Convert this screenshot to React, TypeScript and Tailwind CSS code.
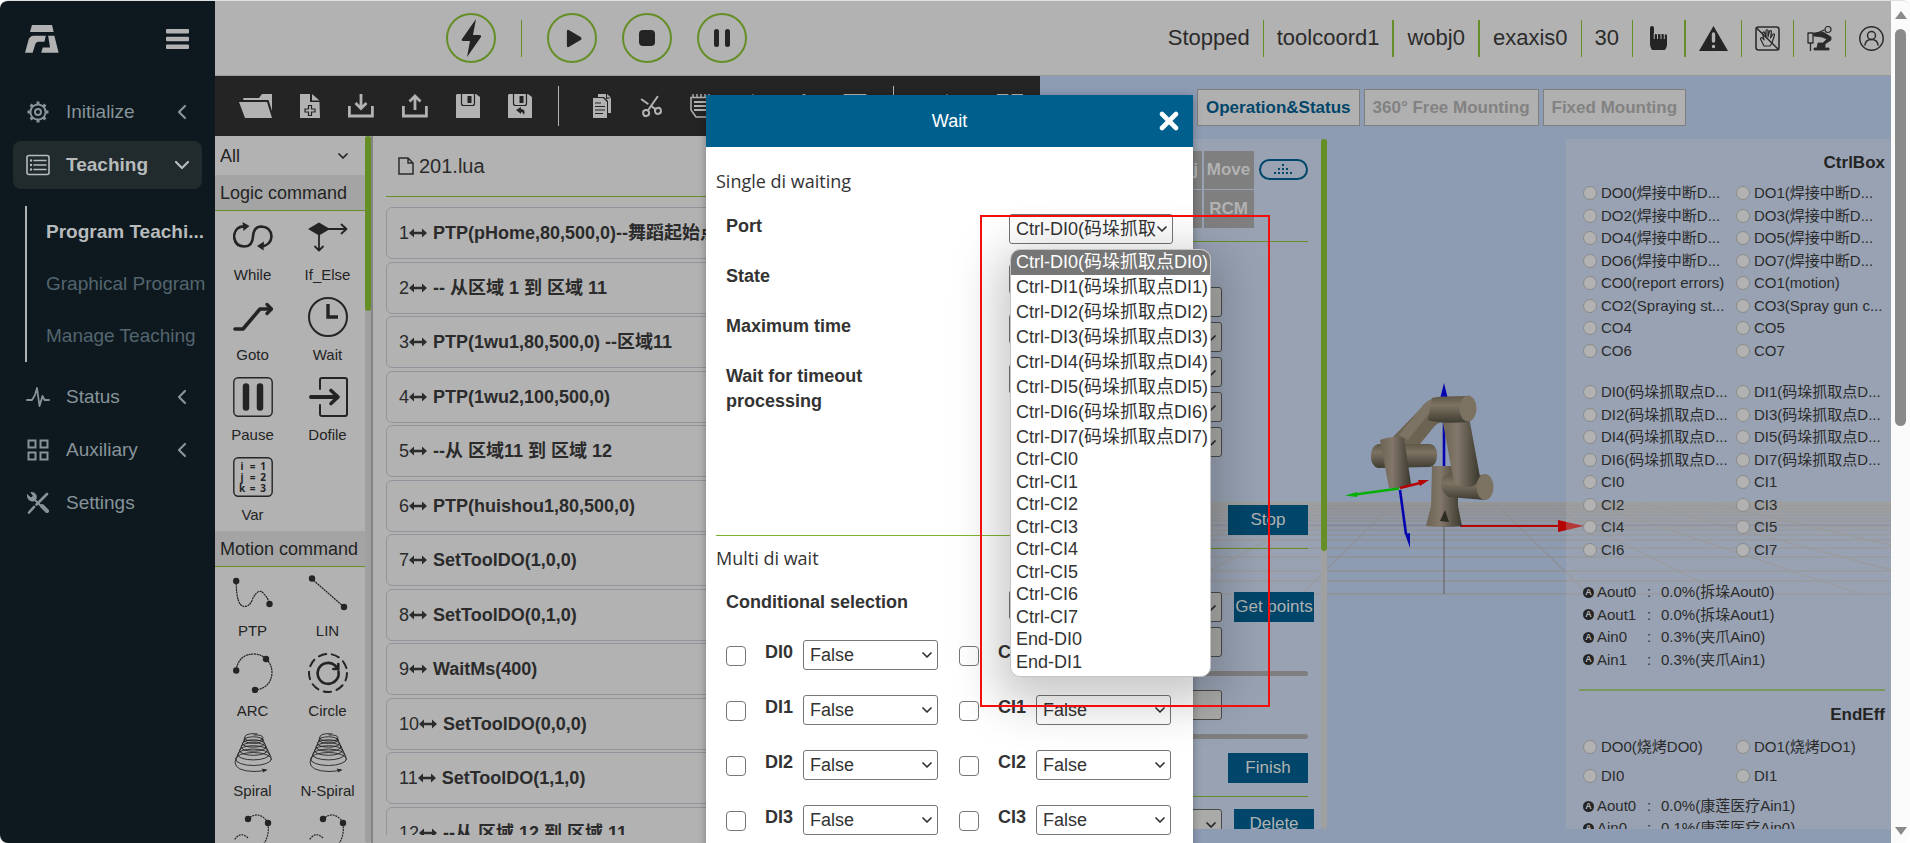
import React from "react";
import { ChevronDown, ChevronLeft, Scissors, X } from "lucide-react";

type SvgProps = { className?: string; box?: string; children: React.ReactNode };

function Svg({ className = "", box = "0 0 24 24", children }: SvgProps) {
  return (
    <svg viewBox={box} className={className} fill="none" stroke="currentColor" strokeLinecap="round" strokeLinejoin="round" aria-hidden="true">
      {children}
    </svg>
  );
}

/* ---------- Sidebar ---------- */

function Logo() {
  return (
    <svg viewBox="75 69 103 85" className="h-7 w-[34px]" fill="#b2b2b2" aria-hidden="true">
      <path d="M96 69h61l5 21H90z" />
      <path d="M75 153l10-37q4-14 17-14h36l-4 18h-17q-9 0-11 8l-8 25z" />
      <path d="M145 102h19l13 51h-53l5-16h22z" />
    </svg>
  );
}

const gearIcon = (
  <Svg className="h-6 w-6">
    <circle cx="12" cy="12" r="7.6" strokeWidth="2" />
    <circle cx="12" cy="12" r="3" strokeWidth="2" />
    <path strokeWidth="3" strokeLinecap="butt" d="M12 1.5v3M12 19.5v3M1.5 12h3M19.5 12h3M4.6 4.6l2 2M17.4 17.4l2 2M4.6 19.4l2-2M17.4 6.6l2-2" />
  </Svg>
);
const teachIcon = (
  <Svg className="h-6 w-6">
    <rect x="1" y="2.5" width="22" height="19" rx="2" strokeWidth="1.6" />
    <path strokeWidth="1.4" d="M8 7.5h12M8 12h12M8 16.500h12" />
    <path strokeWidth="2.4" d="M5 7.500h.01M5 12h.01M5 16.500h.01" />
  </Svg>
);
const statusIcon = (
  <Svg className="h-6 w-6">
    <path strokeWidth="1.8" d="M1 15h5l3-5 2-7 2.500 18 3-10 2 4h4.500" />
  </Svg>
);
const auxIcon = (
  <Svg className="h-6 w-6">
    <path strokeWidth="2" strokeLinejoin="miter" d="M2.500 2.500h7v7h-7zM14.500 2.500h7v7h-7zM2.500 14.500h7v7h-7zM14.500 14.500h7v7h-7z" />
  </Svg>
);
const toolsIcon = (
  <Svg className="h-6 w-6">
    <path strokeWidth="4" d="M16 15l5 5" />
    <path strokeWidth="2.600" d="M21 3L10.500 13.500M8 16l-5 5.500" />
    <path strokeWidth="2" d="M8 8l7 7" />
    <path fill="currentColor" strokeWidth="1" d="M1.500 4l3.500 3 2.500-2L5 1.500C9 1 11 4 10 8L8 10C4 10.500 1 8 1.500 4z" />
  </Svg>
);

function NavRow({ icon, label, chevron, active }: { icon: React.ReactNode; label: string; chevron?: "left" | "down"; active?: boolean }) {
  return (
    <button
      type="button"
      className={
        active
          ? "flex h-12 w-full items-center rounded-lg bg-[#212b2e] px-[13px] pr-2 font-bold text-[#b8bbbc]"
          : "flex h-12 w-full items-center rounded-lg px-[13px] pr-2 text-[#87939a]"
      }
    >
      {icon}
      <span className="ml-4 flex-1 text-left">{label}</span>
      {chevron === "left" && <ChevronLeft className="h-6 w-6" strokeWidth={2.2} />}
      {chevron === "down" && <ChevronDown className="h-6 w-6" strokeWidth={2.2} />}
    </button>
  );
}

function Sidebar() {
  return (
    <nav className="flex w-[215px] shrink-0 flex-col bg-[#0d191e] text-[19px] leading-6">
      <div className="flex h-[75px] items-center justify-between pl-[25px] pr-[26px]">
        <Logo />
        <button type="button" aria-label="Menu" className="text-[#b2b2b2]">
          <svg viewBox="0 0 23 20" className="h-5 w-[23px]" fill="currentColor" aria-hidden="true">
            <rect width="23" height="4.500" rx="1" />
            <rect y="7.800" width="23" height="4.500" rx="1" />
            <rect y="15.500" width="23" height="4.500" rx="1" />
          </svg>
        </button>
      </div>
      <div className="flex flex-col gap-[5px] px-[13px] pt-3">
        <NavRow icon={gearIcon} label="Initialize" chevron="left" />
        <NavRow icon={teachIcon} label="Teaching" chevron="down" active />
      </div>
      <div className="ml-[25px] mt-[17px] flex flex-col border-l-2 border-[#b2b2b2] pl-[19px] text-[#54656f]">
        <a href="#program" className="flex h-[52px] items-center whitespace-nowrap font-bold text-[#b8bbbc]">Program Teachi...</a>
        <a href="#graphical" className="flex h-[52px] items-center whitespace-nowrap">Graphical Program</a>
        <a href="#manage" className="flex h-[52px] items-center whitespace-nowrap">Manage Teaching</a>
      </div>
      <div className="mt-[11px] flex flex-col gap-[5px] px-[13px]">
        <NavRow icon={statusIcon} label="Status" chevron="left" />
        <NavRow icon={auxIcon} label="Auxiliary" chevron="left" />
        <NavRow icon={toolsIcon} label="Settings" />
      </div>
    </nav>
  );
}

/* ---------- Header ---------- */

function RoundButton({ label, children }: { label: string; children: React.ReactNode }) {
  return (
    <button type="button" aria-label={label} className="flex h-[50px] w-[50px] items-center justify-center rounded-full border-2 border-[#658f26] text-[#242424]">
      {children}
    </button>
  );
}

function Header() {
  const cell = "flex h-[37px] items-center px-[13px]";
  const line = "border-l border-[#658f26]";
  const thick = "border-l-2 border-[#658f26]";
  return (
    <header className="flex h-[75px] shrink-0 items-center justify-between border-b border-[#9a9a9a] bg-[#b2b2b2] text-[#2b2b2b]">
      <div className="flex items-center pl-[231px]">
        <RoundButton label="Enable">
          <svg viewBox="0 0 20 38" className="h-[38px] w-5" fill="currentColor" aria-hidden="true"><path d="M15 0L1 20q-1 2 1 2h7L6 38 20 18q1-2-2-2h-6z" /></svg>
        </RoundButton>
        <span className="mx-[25px] h-[37px] w-px bg-[#658f26]" />
        <div className="flex gap-[25px]">
          <RoundButton label="Start">
            <svg viewBox="0 0 18 20" className="ml-1 h-[19px] w-4" fill="currentColor" aria-hidden="true"><path d="M1 2q0-3 3-1l12 7q3 2 0 4L4 19q-3 2-3-1z" /></svg>
          </RoundButton>
          <RoundButton label="Stop program"><span className="h-4 w-4 rounded-sm bg-[#242424]" /></RoundButton>
          <RoundButton label="Pause program">
            <span className="flex gap-1.5"><span className="h-[18px] w-[5px] rounded-full bg-[#242424]" /><span className="h-[18px] w-[5px] rounded-full bg-[#242424]" /></span>
          </RoundButton>
        </div>
      </div>
      <div className="flex items-center text-[22px] leading-7">
        <span className={cell}>Stopped</span>
        <span className={`${cell} ${line}`}>toolcoord1</span>
        <span className={`${cell} ${thick}`}>wobj0</span>
        <span className={`${cell} ${thick}`}>exaxis0</span>
        <span className={`${cell} ${line}`}>30</span>
        <button type="button" aria-label="Manual mode" className={`${cell} ${line}`}>
          <svg viewBox="0 0 25 25" className="h-[25px] w-[25px]" fill="#242424" aria-hidden="true"><path d="M4 2q0-2 2-2t2 2v7q1-2 3.500 0 1.500-2 3.500 0 1.500-2 3.500 0Q21 7 21 10v9q0 2-2 5H6q-2-3-2-6z" /><path stroke="#b2b2b2" strokeWidth="1" d="M11.500 9v4M15 9v4M18.300 9v4M8.200 7v6" /></svg>
        </button>
        <button type="button" aria-label="Warnings" className={`${cell} ${thick}`}>
          <svg viewBox="0 0 29 25" className="h-[25px] w-[29px]" aria-hidden="true"><path fill="#242424" d="M14.500 0L29 25H0z" /><path stroke="#b2b2b2" strokeWidth="3.400" strokeLinecap="round" d="M14.500 8v7M14.500 20.500v.1" /></svg>
        </button>
        <button type="button" aria-label="Drag mode off" className={`${cell} ${line}`}>
          <Svg box="0 0 25 25" className="h-[25px] w-[25px]">
            <rect x="1" y="1" width="23" height="23" rx="2.500" strokeWidth="1.600" />
            <path strokeWidth="1.200" d="M9 20l-3.500-7q0-2 2-1l1.500 2L7.500 7q.5-1.800 2-.5L11 11V4.500q1-1.500 2 0V11l1.500-6q1.500-1 2 .5L15.500 12l2.500-4q1.500-.5 1.500 1L17 17l-2 3z" />
            <path strokeWidth="1.500" d="M1.500 2l22 21.500" />
          </Svg>
        </button>
        <button type="button" aria-label="Robot" className={`${cell} ${line}`}>
          <Svg box="0 0 25 25" className="h-[25px] w-[25px]">
            <path strokeWidth="1.300" d="M1 7h5v10H1zM3.500 17v7.500M6 9l11-5" />
            <circle cx="21" cy="3.500" r="3" strokeWidth="1.200" />
            <path fill="currentColor" strokeWidth=".8" d="M7 7l9-1 8 5v3l-6 4v4h4v2H7v-2h3l1-5h5l4-4-5-2-8-1z" />
          </Svg>
        </button>
        <button type="button" aria-label="User" className={`flex h-[37px] items-center pl-[13px] pr-[7px] ${line}`}>
          <Svg box="0 0 25 25" className="h-[25px] w-[25px]">
            <circle cx="12.500" cy="12.500" r="11.700" strokeWidth="1.500" />
            <circle cx="12.500" cy="9.500" r="4" strokeWidth="1.500" />
            <path strokeWidth="1.500" d="M6 19q.5-5.500 6.500-5.500T19 19" />
          </Svg>
        </button>
      </div>
    </header>
  );
}

/* ---------- Toolbar ---------- */

const C = "#b2b2b2";
const D = "#242424";

const toolbarFile: { name: string; icon: React.ReactNode }[] = [
  { name: "Open", icon: <svg viewBox="0 0 33 24" className="h-6 w-[33px]" fill={C}><path d="M0 8h28l5 16H6z" /><path d="M4 4h16l3-4h10v17l-3.500-11H4.600z" /></svg> },
  { name: "New", icon: <svg viewBox="0 0 20 24" className="h-6 w-5" fill={C}><path d="M0 0h10v8h9.500L20 24H0z" /><path d="M12 0l7.500 6.500H12z" /><path fill={C} stroke={D} strokeWidth="1.200" d="M8.500 11.500h3v3.500h3.500v3h-3.500v3.500h-3V18H5v-3h3.500z" /></svg> },
  { name: "Import", icon: <svg viewBox="0 0 26 24" className="h-6 w-[26px]" fill="none" stroke={C} strokeWidth="2.800"><path d="M1.400 12v10h23V12M13 0v14M7.500 9l5.500 5.500L18.500 9" /></svg> },
  { name: "Export", icon: <svg viewBox="0 0 26 24" className="h-6 w-[26px]" fill="none" stroke={C} strokeWidth="2.800"><path d="M1.400 12v10h23V12M13 16V2M7.500 7.500L13 2l5.500 5.500" /></svg> },
  { name: "Save", icon: <svg viewBox="0 0 24 24" className="h-6 w-6" fill={C}><path d="M1 0h19l4 3v21H0V1z" /><path fill="none" stroke={D} strokeWidth="1.200" d="M5.500 0v9.500q0 2 2 2h9q2 0 2-2V0" /><path fill={D} d="M11.500 2h4v7h-4z" /></svg> },
  { name: "Save as", icon: <svg viewBox="0 0 24 24" className="h-6 w-6" fill={C}><path d="M1 0h19l4 3v21H0V1z" /><path fill="none" stroke={D} strokeWidth="1.200" d="M5.500 0v9.500q0 2 2 2h9q2 0 2-2V0" /><path fill={D} d="M11.500 2h4v7h-4zM8 16l5-3v2q5 0 3 6-1-3-3-3v2z" /></svg> },
];

const toolbarEdit: { name: string; icon: React.ReactNode }[] = [
  { name: "Copy", icon: <svg viewBox="0 0 18 24" className="h-6 w-5" fill={C}><path d="M5 0h8v5l5-1v15h-3V7l-4-4H5z" /><path d="M14 0l4 3.500h-4z" /><path d="M0 4h10l4 4v16H0z" /><path stroke={D} strokeWidth="1.200" d="M2 9h6M2 12.500h10M2 16h10M2 19.500h8" /></svg> },
  { name: "Cut", icon: <Scissors className="h-6 w-6 rotate-[80deg] -scale-x-100" stroke={C} strokeWidth={2} /> },
  { name: "Paste", icon: <svg viewBox="0 0 24 24" className="h-6 w-6" fill={C}><path fill="none" stroke={C} strokeWidth="1.500" d="M1 3.500h22v12L16 23H6l-5-7z" /><path stroke={C} strokeWidth="2.200" d="M4 8h17M4 12h17M4 16h15" /><path stroke={C} strokeWidth="1.400" d="M3 0v3M7 0v3M11 0v3M15 0v3M19 0v3" /></svg> },
  { name: "Move up", icon: <svg viewBox="0 0 24 24" className="h-6 w-6" fill="none" stroke={C} strokeWidth="2.800"><path d="M12 24V2M4 10l8-8 8 8" /></svg> },
  { name: "Move down", icon: <svg viewBox="0 0 24 24" className="h-6 w-6" fill="none" stroke={C} strokeWidth="2.800"><path d="M12 0v22M4 14l8 8 8-8" /></svg> },
  { name: "Edit", icon: <svg viewBox="0 0 24 24" className="h-6 w-6" fill="none" stroke={C} strokeWidth="2.800"><path d="M2 1.400h20v21H2z" /></svg> },
];

function Toolbar() {
  return (
    <div className="flex h-[60px] shrink-0 items-center bg-[#242424] pl-6">
      <div className="flex items-center gap-7">
        {toolbarFile.map((t) => (<button key={t.name} type="button" aria-label={t.name}>{t.icon}</button>))}
      </div>
      <span className="ml-[26px] mr-[30px] h-10 w-px bg-[#b2b2b2]" />
      <div className="flex items-center gap-[27px] pl-[3px]">
        {toolbarEdit.map((t) => (<button key={t.name} type="button" aria-label={t.name}>{t.icon}</button>))}
      </div>
      <span className="ml-[26px] mr-[30px] h-10 w-px bg-[#b2b2b2]" />
      <div className="flex items-center gap-[37px] pl-3">
        <button type="button" aria-label="Convert">
          <svg viewBox="0 0 24 24" className="h-6 w-6" fill="none" stroke={C} strokeWidth="2.800"><path d="M2 12h20M10 1l11 11-11 11" /></svg>
        </button>
        <button type="button" aria-label="Layout">
          <svg viewBox="0 0 26 24" className="h-6 w-[26px]" fill="none" stroke={C} strokeWidth="2.400"><path d="M1.200 1.200h9v9h-9zM15.800 1.200h9v9h-9zM1.200 14h9v9h-9zM15.800 14h9v9h-9z" /></svg>
        </button>
      </div>
    </div>
  );
}

/* ---------- Command palette ---------- */

function Cmd({ children }: { children: React.ReactNode }) {
  return <Svg box="0 0 40 40" className="h-10 w-10">{children}</Svg>;
}

const dot = (x: number, y: number) => <circle key={`${x}-${y}`} cx={x} cy={y} r="3.200" fill="currentColor" stroke="none" />;

const spiral = (
  <Cmd>
    <g strokeWidth=".9">
      <path d="M24 .8q-12-1-12.500 4Q12 8 21 8t9-3.500q-1-3-9-2.500" />
      <ellipse cx="20.500" cy="7" rx="9.500" ry="3.200" />
      <ellipse cx="20.500" cy="10.500" rx="11" ry="3.700" />
      <ellipse cx="20.500" cy="14" rx="12.500" ry="4.200" />
      <ellipse cx="20.500" cy="17.500" rx="14" ry="4.800" />
      <ellipse cx="20.500" cy="21.500" rx="16" ry="5.400" />
      <ellipse cx="20.500" cy="26" rx="18" ry="6.500" />
      <path d="M12 5L2 29q0 9 19 9.500 6 0 12-1.500M29 5l9 19" />
    </g>
    <path fill="currentColor" stroke="none" d="M28.500 35.500l6 1.200-5 3 .8-2z" />
  </Cmd>
);

const partial = (
  <Cmd>
    <path strokeWidth="1.200" strokeDasharray="1 1.800" d="M15 6q10-9 19 2 4 13-4 24M2 26q6-8 13-1" />
    {dot(15, 6)}
    {dot(35, 10)}
  </Cmd>
);

const logicCommands: { name: string; icon: React.ReactNode }[] = [
  { name: "While", icon: <Cmd><path strokeWidth="2.600" d="M13 9.500q-11-1-12 10 1 10 10.500 10 8 0 8.500-10 .5-10 8.500-10Q38 10 38.500 19.500q-.5 9-11 10" /><path fill="currentColor" stroke="none" d="M9.500 5l7 4-6 5zM31 24.500l-7 4.500 6.500 4.500z" /></Cmd> },
  { name: "If_Else", icon: <Cmd><path fill="currentColor" stroke="none" d="M0 12l11-6.500L22 12l-11 6.500z" /><path strokeWidth="1.800" d="M20 12h18M33.500 7.500L38.500 12l-5 4.500M11 17v16M7 29.500l4 4 4-4" /></Cmd> },
  { name: "Goto", icon: <Cmd><path strokeWidth="3.600" d="M2 32h8L27 12h10" /><path strokeWidth="3.200" d="M34 7.500l4.500 4.500-4.500 4.500" /></Cmd> },
  { name: "Wait", icon: <Cmd><circle cx="20" cy="20" r="19" strokeWidth="2" /><path strokeWidth="3.400" strokeLinecap="butt" strokeLinejoin="miter" d="M20 7v13h10" /></Cmd> },
  { name: "Pause", icon: <Cmd><rect x=".8" y=".8" width="38.400" height="38.400" rx="4.500" strokeWidth="1.400" /><path strokeWidth="6.500" d="M13 9.500v21M27 9.500v21" /></Cmd> },
  { name: "Dofile", icon: <Cmd><path strokeWidth="2" d="M12 12V3q0-2 2-2h23q2 0 2 2v34q0 2-2 2H14q-2 0-2-2v-9" /><path strokeWidth="4" d="M3 20h26" /><path strokeWidth="3.600" d="M23 13.500l7 6.500-7 6.500" /></Cmd> },
  {
    name: "Var",
    icon: (
      <svg viewBox="0 0 40 40" className="h-10 w-10 font-['Noto_Sans',sans-serif]" aria-hidden="true">
        <rect x=".8" y=".8" width="38.400" height="38.400" rx="4.500" fill="none" stroke="currentColor" strokeWidth="1.400" />
        <g fill="currentColor" fontSize="10" fontWeight="700" textAnchor="middle">
          <text x="9" y="13">i</text><text x="19.500" y="13">=</text><text x="30" y="13">1</text>
          <text x="9" y="23.500">j</text><text x="19.500" y="23.500">=</text><text x="30" y="23.500">2</text>
          <text x="9" y="34.500">k</text><text x="19.500" y="34.500">=</text><text x="30" y="34.500">3</text>
        </g>
      </svg>
    ),
  },
];

const motionCommands: { name: string; icon: React.ReactNode }[] = [
  { name: "PTP", icon: <Cmd><path strokeWidth="1.300" strokeDasharray="1 1.700" d="M3.200 8q0 25 8 25.500 6 0 8.500-8Q26 14 31 21q4 4 5.500 9.500" />{dot(3.2, 8)}{dot(36.5, 31)}</Cmd> },
  { name: "LIN", icon: <Cmd><path strokeWidth="1.300" strokeDasharray="1 1.700" d="M4 6l32 28" />{dot(4, 5.5)}{dot(36, 34)}</Cmd> },
  { name: "ARC", icon: <Cmd><path strokeWidth="1.300" strokeDasharray="1 1.700" d="M3 17Q6 1 21 1q7 0 12 5 6 5 6 14-1 15-17 17" />{dot(3.2, 17.5)}{dot(33, 6)}{dot(22, 37)}</Cmd> },
  { name: "Circle", icon: <Cmd><circle cx="20" cy="20" r="19" strokeWidth="2" strokeDasharray="7.500 5.760" /><path strokeWidth="2.600" d="M30.500 18.500a10.500 10.500 0 1 1-4-6.500l3 3M30.300 11v5h-5" /></Cmd> },
  { name: "Spiral", icon: spiral },
  { name: "N-Spiral", icon: spiral },
  { name: "Circle-C", icon: partial },
  { name: "N-Circle", icon: partial },
];

function CommandGroup({ title, items }: { title: string; items: { name: string; icon: React.ReactNode }[] }) {
  return (
    <section>
      <h2 className="flex h-9 items-center border-b border-[#658f26] bg-[#a4a4a4] pl-[5px] text-lg">{title}</h2>
      <div className="grid grid-cols-2">
        {items.map((it) => (
          <button key={it.name} type="button" className="flex h-20 flex-col items-center pt-1.5 text-[15px] leading-5">
            {it.icon}
            <span className="mt-2 whitespace-nowrap">{it.name}</span>
          </button>
        ))}
      </div>
    </section>
  );
}

function CommandPalette() {
  return (
    <aside className="flex w-[158px] shrink-0 border-r-2 border-[#848484] text-[#242424]">
      <div className="w-[150px] overflow-hidden">
        <div className="relative">
          <select aria-label="Command filter" className="h-[39px] w-full appearance-none pl-[5px] text-lg">
            <option>All</option>
          </select>
          <ChevronDown className="pointer-events-none absolute right-[14px] top-3 h-4 w-4" strokeWidth={2.600} />
        </div>
        <CommandGroup title="Logic command" items={logicCommands} />
        <CommandGroup title="Motion command" items={motionCommands} />
      </div>
      <div className="w-1.5 rounded-full bg-[#a0a0a0]">
        <div className="h-[175px] rounded-full bg-[#658f26]" />
      </div>
    </aside>
  );
}

/* ---------- Program ---------- */

const program = [
  "PTP(pHome,80,500,0)--舞蹈起始点",
  "-- 从区域 1 到 区域 11",
  "PTP(1wu1,80,500,0) --区域11",
  "PTP(1wu2,100,500,0)",
  "--从 区域11 到 区域 12",
  "PTP(huishou1,80,500,0)",
  "SetToolDO(1,0,0)",
  "SetToolDO(0,1,0)",
  "WaitMs(400)",
  "SetToolDO(0,0,0)",
  "SetToolDO(1,1,0)",
  "--从 区域 12 到 区域 11",
];

function ProgramPanel() {
  return (
    <section className="mb-2 flex min-w-0 flex-1 flex-col overflow-hidden pl-[13px] pr-3 text-[#2b2b2b]">
      <h2 className="flex h-[61px] shrink-0 items-center gap-[5px] border-b border-[#658f26] pl-3 text-xl">
        <Svg box="0 0 16 18" className="h-[18px] w-4"><path strokeWidth="1.500" strokeLinejoin="miter" d="M1 1h9l5 5v11H1zM10 1v5h5" /></Svg>
        201.lua
      </h2>
      <ol className="mt-2.5 grid h-[652px] shrink-0 content-between text-lg leading-6">
        {program.map((line, i) => (
          <li key={i} className="flex h-[52px] items-center whitespace-nowrap rounded-md border border-[#94949c] pl-3">
            <span>{i + 1}</span>
            <svg viewBox="0 0 18 10" className="h-2.5 w-[18px]" fill="currentColor" aria-hidden="true"><path d="M0 5l5-4.500v3.200h8V.5L18 5l-5 4.500V6.300H5v3.200z" /></svg>
            <b className="ml-1.5">{line}</b>
          </li>
        ))}
      </ol>
    </section>
  );
}

/* ---------- 3D scene ---------- */

function Scene() {
  const rows = [506, 509, 512, 515, 518, 521, 526, 530, 535, 540, 548, 557, 571, 581, 594];
  return (
    <svg viewBox="1040 76 851 767" preserveAspectRatio="xMidYMin slice" className="absolute inset-0 h-full w-full" aria-hidden="true">
      <defs>
        <linearGradient id="ground" x1="0" x2="0" y1="0" y2="1">
          <stop offset="0" stopColor="#959592" />
          <stop offset=".3" stopColor="#9297a0" stopOpacity=".8" />
          <stop offset="1" stopColor="#8d9bb3" stopOpacity="0" />
        </linearGradient>
        <linearGradient id="tubeV" x1="0" x2="1" y1="0" y2="0">
          <stop offset="0" stopColor="#6d6455" /><stop offset=".4" stopColor="#82776a" /><stop offset="1" stopColor="#3a382d" />
        </linearGradient>
        <linearGradient id="tubeH" x1="0" x2="0" y1="0" y2="1">
          <stop offset="0" stopColor="#5f5848" /><stop offset=".35" stopColor="#7d7363" /><stop offset="1" stopColor="#3f3c31" />
        </linearGradient>
      </defs>
      <rect x="1040" y="502" width="851" height="50" fill="url(#ground)" />
      <g stroke="#8f9194" strokeWidth="1.300">
        {rows.map((y) => (<path key={y} d={`M1040 ${y}H1891`} />))}
        <path d="M1343 503L1170 590M1395 503L1301 594M1495 503L1588 594M1543 503L1724 594M1590 503L1860 594M1640 503L1891 570M1300 503L1040 600M1710 503L1891 545" />
      </g>
      <path stroke="#7a7f8e" strokeWidth="1" d="M1040 525H1891" />
      <path stroke="#6f757c" strokeWidth="1.600" d="M1444 526V594" />
      <path stroke="#b50303" strokeWidth="2" d="M1460 526H1560" />
      <path fill="#b50303" d="M1558 520l26 6-26 6z" />
      <path stroke="#0505b0" strokeWidth="2.600" d="M1444 392V468" />
      <path fill="#0505b0" d="M1444 383l3.500 14h-7z" />
      {/* base */}
      <path fill="url(#tubeV)" d="M1432 466h26v40l4 20q-18 2-36 0l5-20z" />
      <path fill="#2f2c22" d="M1445 510l-5 11 9 1z" />
      {/* lower arm */}
      <path fill="url(#tubeH)" d="M1449 474q-8 2-8 10t8 13l36 3v-25z" />
      <path fill="url(#tubeV)" d="M1442 418l27-1 11 60q-2 10-14 10t-13-10z" />
      <ellipse cx="1485" cy="487" rx="8.500" ry="13" fill="#7c7262" />
      {/* upper arm */}
      <path fill="#6c6353" d="M1427 402q6-5 14-5l4 25q-8 0-12 6l-18 22-23-12z" />
      <path fill="#7d7365" d="M1424 404q4-4 9-5l2 7-27 34-9-5z" />
      <path fill="url(#tubeH)" d="M1432 398q6-2 36-2v26q-28 2-40-2z" />
      <ellipse cx="1468" cy="408.500" rx="8.500" ry="13" fill="#7c7262" />
      {/* wrist */}
      <path fill="url(#tubeH)" d="M1378 444h52q7 1 7 11t-7 12l-52 1q-7-2-7-12t7-12z" />
      <path fill="url(#tubeV)" d="M1380 440q11-5 24-2l7 46q-11 6-22 4z" />
      {/* tool frame */}
      <path stroke="#b50303" strokeWidth="2.600" d="M1400 488l20-5" />
      <path fill="#b50303" d="M1418 480l11 0-9 6z" />
      <path stroke="#05b005" strokeWidth="2.600" d="M1399 488.500l-44 6" />
      <path fill="#05b005" d="M1357 492l-12 3.500 12 1.500z" />
      <path stroke="#0505b0" strokeWidth="2.600" d="M1400 490l6 44" />
      <path fill="#0505b0" d="M1405 534l5-1 0 15z" />
    </svg>
  );
}

/* ---------- Operation panel ---------- */

const field = "h-[30px] w-[172px] shrink-0 appearance-none rounded-[3px] border border-[#4a4a4a] bg-[#aaaaa8]";

function OpSelect({ label }: { label: string }) {
  return (
    <div className="relative w-[172px]">
      <select aria-label={label} className={field}><option /></select>
      <ChevronDown className="pointer-events-none absolute right-[3px] top-2 h-4 w-4 text-[#242424]" strokeWidth={2.600} />
    </div>
  );
}

function OpButton({ children }: { children: React.ReactNode }) {
  return <button type="button" className="h-[30px] w-20 shrink-0 whitespace-nowrap bg-[#00466a] text-center text-[17px] leading-[30px] text-[#b2b2b2]">{children}</button>;
}

function OperationPanel() {
  const mode = "flex h-[38px] w-[50px] items-center justify-center bg-[#7f7f7f] text-[17px] font-bold text-[#b2b2b2]";
  return (
    <section className="flex w-[287px] overflow-hidden">
      <div className="flex h-[900px] w-[281px] shrink-0 flex-col bg-[#b2b2b2]/30 pl-2.5 pt-3">
        <div className="mr-[13px] flex items-start justify-end">
          <div className="grid grid-cols-4 gap-x-0.5 gap-y-px">
            <button type="button" className={mode}>Base</button>
            <button type="button" className={mode}>Tool</button>
            <button type="button" className={mode}>Wobj</button>
            <button type="button" className={mode}>Move</button>
            <button type="button" className={mode}>Joint</button>
            <button type="button" className={mode}>Ext</button>
            <button type="button" className={mode}>FT</button>
            <button type="button" className={mode}>RCM</button>
          </div>
          <button type="button" aria-label="Collapse" className="ml-1.5 mt-2 flex h-[21px] w-[50px] items-center justify-center rounded-full border-2 border-[#00466a]">
            <svg viewBox="0 0 18 11" className="h-[11px] w-[18px]" fill="#00466a" aria-hidden="true">
              <path d="M8 0h2v2H8zM4 4h2v2H4zM8 4h2v2H8zM12 4h2v2h-2zM0 8h2v2H0zM4 8h2v2H4zM8 8h2v2H8zM12 8h2v2h-2zM16 8h2v2h-2z" />
            </svg>
          </button>
        </div>
        <hr className="mr-[13px] mt-[13px] border-[#658f26]" />
        <div className="mt-[45px] flex flex-col gap-[5px]">
          <input aria-label="Joint value" className={field} />
          <OpSelect label="Tool frame" />
          <OpSelect label="Work frame" />
          <OpSelect label="External axis" />
          <OpSelect label="Direction" />
        </div>
        <div className="mr-[13px] mt-12 flex justify-end"><OpButton>Stop</OpButton></div>
        <hr className="mr-[13px] mt-[13px] border-[#658f26]" />
        <div className="mt-[43px] flex gap-3"><OpSelect label="Point" /><OpButton>Get points</OpButton></div>
        <input aria-label="Speed" className={`${field} mt-[5px]`} />
        <div className="mr-[13px] mt-3.5 h-[5px] shrink-0 rounded-full bg-[#7f7f7f]" />
        <input aria-label="Acceleration" className={`${field} mt-3.5`} />
        <div className="mr-[13px] mt-3.5 h-[5px] shrink-0 rounded-full bg-[#7f7f7f]" />
        <div className="mr-[13px] mt-3.5 flex justify-end"><OpButton>Finish</OpButton></div>
        <hr className="mr-[13px] mt-[13px] border-[#658f26]" />
        <div className="mt-3 flex gap-3"><OpSelect label="Saved point" /><OpButton>Delete</OpButton></div>
      </div>
      <div className="w-1.5 shrink-0 rounded-full bg-[#a0a0a0]">
        <div className="h-[412px] rounded-full bg-[#658f26]" />
      </div>
    </section>
  );
}

/* ---------- IO status ---------- */

const outputs = [
  "DO0(焊接中断D...", "DO1(焊接中断D...", "DO2(焊接中断D...", "DO3(焊接中断D...",
  "DO4(焊接中断D...", "DO5(焊接中断D...", "DO6(焊接中断D...", "DO7(焊接中断D...",
  "CO0(report errors)", "CO1(motion)", "CO2(Spraying st...", "CO3(Spray gun c...",
  "CO4", "CO5", "CO6", "CO7",
];
const inputs = [
  "DI0(码垛抓取点D...", "DI1(码垛抓取点D...", "DI2(码垛抓取点D...", "DI3(码垛抓取点D...",
  "DI4(码垛抓取点D...", "DI5(码垛抓取点D...", "DI6(码垛抓取点D...", "DI7(码垛抓取点D...",
  "CI0", "CI1", "CI2", "CI3", "CI4", "CI5", "CI6", "CI7",
];

function Signal({ name }: { name: string }) {
  return (
    <label className="flex items-center gap-1 whitespace-nowrap">
      <input type="radio" className="h-3.5 w-3.5 shrink-0 appearance-none rounded-full border border-[#8a8a8a] bg-[#b2b2b2]" />
      {name}
    </label>
  );
}

function Analog({ name, value }: { name: string; value: string }) {
  return (
    <div className="flex items-center whitespace-nowrap">
      <span className="flex h-[11px] w-[11px] items-center justify-center rounded-full bg-[#242424] text-[9px] font-bold leading-none text-[#b2b2b2]">A</span>
      <span className="ml-[3px] w-[50px]">{name}</span>
      <span className="w-3.5">:</span>
      <span>{value}</span>
    </div>
  );
}

function StatusPanel() {
  return (
    <section className="w-[325px] overflow-hidden bg-[#b2b2b2]/30 pl-[17px] text-[15px] leading-[22px] text-[#2b2b2b]">
      <h2 className="mt-3 pr-1.5 text-right text-[17px] font-bold leading-6 text-[#242424]">CtrlBox</h2>
      <div className="mt-[7px] grid h-[180px] auto-rows-fr grid-cols-[153px_1fr]">
        {outputs.map((n) => (<Signal key={n} name={n} />))}
      </div>
      <div className="mt-[19px] grid h-[180px] auto-rows-fr grid-cols-[153px_1fr]">
        {inputs.map((n) => (<Signal key={n} name={n} />))}
      </div>
      <div className="mt-5 grid h-[90px] auto-rows-fr">
        <Analog name="Aout0" value="0.0%(拆垛Aout0)" />
        <Analog name="Aout1" value="0.0%(拆垛Aout1)" />
        <Analog name="Ain0" value="0.3%(夹爪Ain0)" />
        <Analog name="Ain1" value="0.3%(夹爪Ain1)" />
      </div>
      <hr className="-ml-1 mr-1.5 mt-[18px] border-t-2 border-[#7a9a5c]" />
      <h2 className="mt-3 pr-1.5 text-right text-[17px] font-bold leading-6 text-[#242424]">EndEff</h2>
      <div className="mt-[5px] grid auto-rows-[29px] grid-cols-[153px_1fr]">
        <Signal name="DO0(烧烤DO0)" />
        <Signal name="DO1(烧烤DO1)" />
        <Signal name="DI0" />
        <Signal name="DI1" />
      </div>
      <div className="mt-[5px] grid auto-rows-[22px]">
        <Analog name="Aout0" value="0.0%(康莲医疗Ain1)" />
        <Analog name="Ain0" value="0.1%(康莲医疗Ain0)" />
      </div>
    </section>
  );
}

/* ---------- Wait dialog ---------- */

const ports = [0, 1, 2, 3, 4, 5, 6, 7].map((n) => `Ctrl-DI${n}(码垛抓取点DI${n})`);
const shortPorts = ["Ctrl-CI0", "Ctrl-CI1", "Ctrl-CI2", "Ctrl-CI3", "Ctrl-CI4", "Ctrl-CI5", "Ctrl-CI6", "Ctrl-CI7", "End-DI0", "End-DI1"];

function DialogSelect({ id, value }: { id: string; value: string }) {
  return (
    <div className="relative w-full">
      <select id={id} className="h-[30px] w-full appearance-none rounded-[3px] border border-[#767676] bg-transparent pl-1.5 pr-4 text-lg leading-6">
        <option>{value}</option>
      </select>
      <ChevronDown className="pointer-events-none absolute right-[3px] top-[7px] h-4 w-4" strokeWidth={2.600} />
    </div>
  );
}

function DialogRow({ id, label, value, menu }: { id: string; label: string; value: string; menu?: React.ReactNode }) {
  return (
    <div className="flex h-[50px] items-start">
      <label htmlFor={id} className="w-[283px] shrink-0 pr-20 font-bold">{label}</label>
      <div className="relative w-[164px]">
        <DialogSelect id={id} value={value} />
        {menu}
      </div>
    </div>
  );
}

function PortMenu() {
  return (
    <div role="listbox" aria-label="Port options" className="absolute left-px top-[35px] z-20 w-[201px] overflow-hidden rounded-[10px] border border-[#c4c4c4] bg-white pb-px text-lg shadow-[0_14px_48px_12px_rgba(0,0,0,0.22)]">
      {ports.map((p, i) => (
        <div key={p} role="option" aria-selected={i === 0} className={i === 0 ? "h-[25px] whitespace-nowrap bg-[#767676] pl-[5px] leading-[25px] text-white" : "h-[25px] whitespace-nowrap pl-[5px] leading-[25px]"}>{p}</div>
      ))}
      <div className="grid h-[225px] auto-rows-fr">
        {shortPorts.map((p) => (<div key={p} role="option" aria-selected={false} className="pl-[5px] leading-[18px]">{p}</div>))}
      </div>
    </div>
  );
}

function Condition({ name }: { name: string }) {
  return (
    <div className="flex h-[55px] items-start">
      <input id={`use-${name}`} type="checkbox" className="mt-1.5 h-5 w-5 shrink-0 appearance-none rounded-[4px] border-[1.5px] border-[#767676] bg-white" />
      <label htmlFor={`use-${name}`} className="ml-[19px] w-[38px] shrink-0 font-bold">{name}</label>
      <div className="w-[135px]"><DialogSelect id={`value-${name}`} value="False" /></div>
    </div>
  );
}

function WaitDialog() {
  return (
    <div role="dialog" aria-label="Wait" className="absolute left-[706px] top-[95px] z-10 w-[487px] bg-white text-lg leading-[25px] text-[#333] shadow-[0_2px_8px_rgba(0,0,0,0.3)]">
      <div className="relative flex h-[52px] items-center justify-center bg-[#005f8d] text-white">
        Wait
        <button type="button" aria-label="Close" className="absolute right-2.5 top-3"><X className="h-7 w-7" strokeWidth={4} /></button>
      </div>
      <div className="px-2.5 pb-10 pt-[22px]">
        <h3 className="h-6 font-['Open_Sans',sans-serif] leading-6">Single di waiting</h3>
        <div className="pl-2.5 pt-[21px]">
          <DialogRow id="port" label="Port" value="Ctrl-DI0(码垛抓取" menu={<PortMenu />} />
          <DialogRow id="state" label="State" value="False" />
          <DialogRow id="max-time" label="Maximum time" value="" />
          <DialogRow id="timeout" label="Wait for timeout processing" value="" />
        </div>
        <hr className="mr-0.5 mt-[121px] border-[#7fb52e]" />
        <h3 className="mt-2.5 h-6 font-['Open_Sans',sans-serif] leading-6">Multi di wait</h3>
        <div className="pl-2.5 pt-5">
          <DialogRow id="condition" label="Conditional selection" value="" />
          <div className="grid grid-cols-[233px_1fr]">
            {["DI0", "CI0", "DI1", "CI1", "DI2", "CI2", "DI3", "CI3"].map((n) => (<Condition key={n} name={n} />))}
          </div>
        </div>
      </div>
    </div>
  );
}

/* ---------- Page ---------- */

export default function App() {
  const tab = "flex h-[37px] items-center border border-[#7f7f7f] bg-[#b0b0b0] px-2 text-[17px] font-bold";
  return (
    <div className="relative h-screen overflow-hidden bg-white font-['Liberation_Sans','Noto_Sans_CJK_SC',sans-serif]">
      <div className="flex h-full overflow-hidden rounded-lg border-t border-[#dfe2e2] bg-[#fbfbfb]">
        <Sidebar />
        <div className="flex min-w-0 flex-1 flex-col">
          <Header />
          <div className="flex min-h-0 flex-1">
            <main className="flex w-[825px] shrink-0 flex-col bg-[#b2b2b2]">
              <Toolbar />
              <div className="flex min-h-0 flex-1">
                <CommandPalette />
                <ProgramPanel />
              </div>
            </main>
            <div className="relative flex min-w-0 flex-1 flex-col bg-[#8d9bb3]">
              <Scene />
              <div className="relative flex gap-1 whitespace-nowrap pl-[157px] pt-[13px]">
                <button type="button" className={`${tab} text-[#00466a]`}>Operation&amp;Status</button>
                <button type="button" className={`${tab} text-[#828282]`}>360° Free Mounting</button>
                <button type="button" className={`${tab} text-[#828282]`}>Fixed Mounting</button>
              </div>
              <div className="relative mb-3.5 mt-[13px] flex min-h-0 flex-1 justify-between">
                <OperationPanel />
                <StatusPanel />
              </div>
            </div>
          </div>
        </div>
        <div className="flex w-[19px] shrink-0 flex-col items-center justify-between bg-[#fbfbfb] pb-2 pt-2.5">
          <div className="flex flex-col items-center">
            <svg viewBox="0 0 12 8" className="h-2 w-3" fill="#8a8a8a" aria-hidden="true"><path d="M6 0l6 8H0z" /></svg>
            <div className="mt-2.5 h-[397px] w-[11px] rounded-full bg-[#8a8a8a]" />
          </div>
          <svg viewBox="0 0 12 8" className="h-2 w-3" fill="#8a8a8a" aria-hidden="true"><path d="M6 8l6-8H0z" /></svg>
        </div>
      </div>
      <WaitDialog />
      <div className="pointer-events-none absolute left-[980px] top-[215px] z-30 h-[492px] w-[290px] border-2 border-[#f40d0d]" />
    </div>
  );
}
